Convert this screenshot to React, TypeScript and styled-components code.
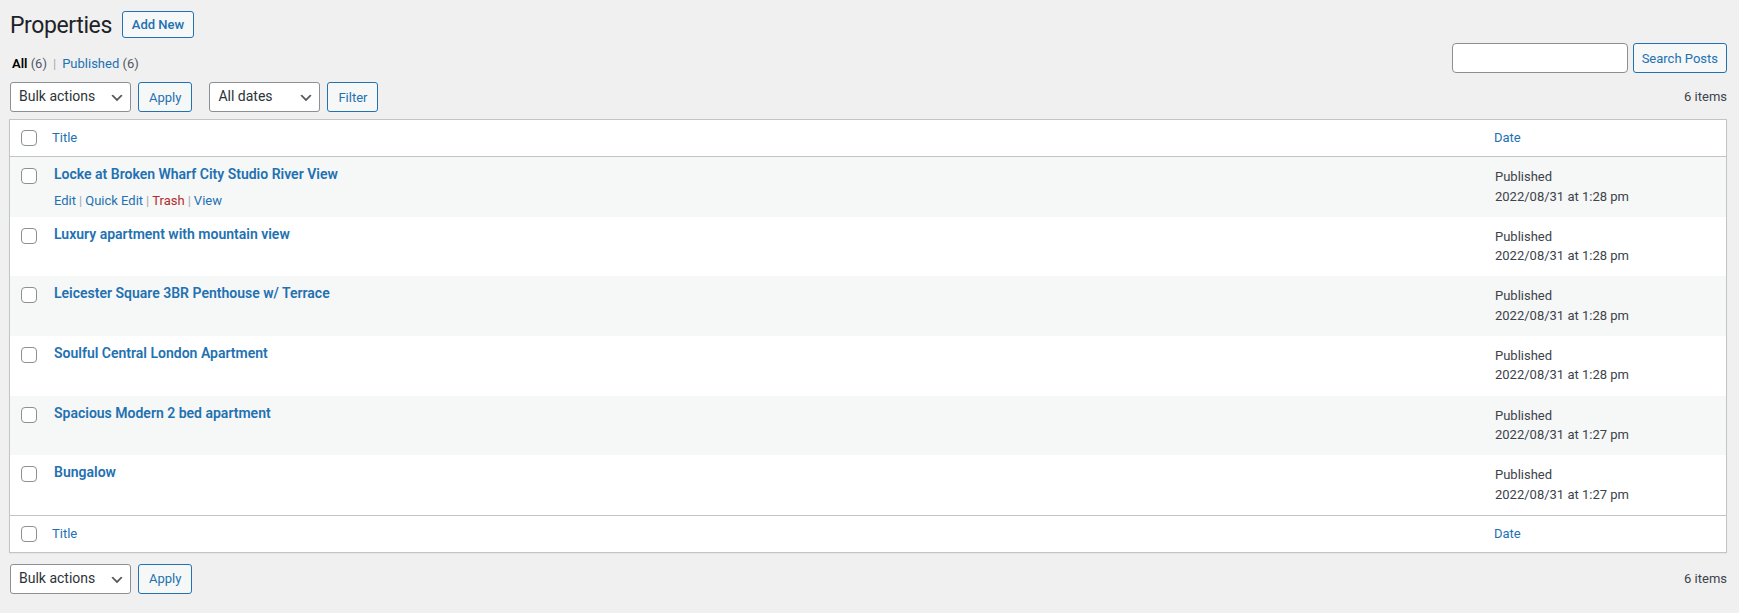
import React from 'react';
import styled, { createGlobalStyle } from 'styled-components';

const Global = createGlobalStyle`
  html, body { margin: 0; padding: 0; background: #f0f0f1; }
  body {
    font-family: Roboto, "Liberation Sans", Arial, sans-serif;
    font-size: 13px;
    color: #3c434a;
    line-height: 1.4;
  }
  * { box-sizing: border-box; }
`;

const Wrap = styled.div`
  padding: 0 12px 0 9px;
  width: 1739px;
`;

const HeadingRow = styled.div`
  display: flex;
  align-items: center;
  gap: 10px;
  height: 38px;
  padding: 11px 0 0 1px;
`;

const PageTitle = styled.h1`
  margin: 0;
  font-size: 23px;
  font-weight: 400;
  letter-spacing: -0.4px;
  line-height: 25px;
  height: 27px;
  color: #1d2327;
  padding-top: 2px;
`;

const Button = styled.button<{ $h?: number; $px?: number }>`
  display: inline-flex;
  align-items: center;
  justify-content: center;
  height: ${(p) => p.$h ?? 30}px;
  padding: 0 ${(p) => p.$px ?? 10}px;
  border: 1px solid #2271b1;
  border-radius: 3px;
  background: #f6f7f7;
  color: #2271b1;
  font-family: inherit;
  font-size: 13px;
  font-weight: ${(p) => (p.$h ? 500 : 400)};
  cursor: pointer;
  white-space: nowrap;
`;

const FilterRow = styled.div`
  display: flex;
  justify-content: space-between;
  align-items: flex-start;
  margin-top: 5px;
  height: 30px;
`;

const SubSub = styled.ul`
  display: flex;
  list-style: none;
  margin: 11px 0 0 3px;
  padding: 0;
  font-size: 13px;
  line-height: 20px;
  color: #646970;
`;

const SubItem = styled.li<{ $current?: boolean }>`
  a {
    color: ${(p) => (p.$current ? '#000' : '#2271b1')};
    font-weight: ${(p) => (p.$current ? 600 : 400)};
    text-decoration: none;
  }
`;

const Count = styled.span`
  color: #50575e;
  font-weight: 400;
`;

const Sep = styled.span`
  color: #a7aaad;
  padding: 0 6px;
`;

const SearchBox = styled.div`
  display: flex;
  gap: 5px;
`;

const SearchInput = styled.input`
  width: 176px;
  height: 30px;
  border: 1px solid #8c8f94;
  border-radius: 4px;
  background: #fff;
  padding: 0 8px;
  font-family: inherit;
  font-size: 14px;
  outline: none;
`;

const Tablenav = styled.div<{ $top?: number }>`
  display: flex;
  align-items: center;
  margin-top: ${(p) => p.$top ?? 9}px;
  height: 30px;
  padding-left: 1px;
`;

const Actions = styled.div`
  display: flex;
  align-items: center;
  gap: 7px;
  margin-right: 17px;
`;

const SelectBox = styled.div<{ $w: number }>`
  position: relative;
  display: flex;
  align-items: center;
  width: ${(p) => p.$w}px;
  height: 30px;
  padding: 0 24px 0 8px;
  border: 1px solid #8c8f94;
  border-radius: 3px;
  background: #fff;
  color: #2c3338;
  font-size: 14px;
  svg {
    position: absolute;
    right: 5px;
    top: 7px;
  }
`;

const DisplayNum = styled.div`
  margin-left: auto;
  font-size: 13px;
  color: #3c434a;
`;

const Table = styled.div`
  margin-top: 7px;
  border: 1px solid #c3c4c7;
  background: #fff;
  box-shadow: 0 1px 1px rgba(0, 0, 0, 0.04);
`;

const cols = '32px 1fr 242px';

const HeadRow = styled.div<{ $foot?: boolean }>`
  display: grid;
  grid-template-columns: ${cols};
  align-items: center;
  height: 37px;
  ${(p) => (p.$foot ? 'border-top: 1px solid #c3c4c7;' : 'border-bottom: 1px solid #c3c4c7;')}
`;

const Row = styled.div<{ $alt: boolean }>`
  display: grid;
  grid-template-columns: ${cols};
  align-items: start;
  height: 59.67px;
  background: ${(p) => (p.$alt ? '#f6f7f7' : '#fff')};
`;

const Check = styled.span`
  display: block;
  width: 16px;
  height: 16px;
  border: 1px solid #8c8f94;
  border-radius: 4px;
  background: #fff;
`;

const CheckCell = styled.div<{ $row?: boolean }>`
  padding-left: 11px;
  padding-top: ${(p) => (p.$row ? 11 : 0)}px;
`;

const HeadLink = styled.a<{ $pl: number }>`
  padding-left: ${(p) => p.$pl}px;
  color: #2271b1;
  text-decoration: none;
  font-size: 13px;
`;

const TitleCell = styled.div`
  padding: 8px 10px 0 12px;
`;

const RowTitle = styled.a`
  display: block;
  color: #2271b1;
  font-size: 14px;
  font-weight: 600;
  line-height: 19.6px;
  text-decoration: none;
  margin-bottom: 4px;
`;

const RowActions = styled.div`
  padding-top: 2px;
  font-size: 13px;
  line-height: 19.5px;
  color: #a7aaad;
`;

const ActionLink = styled.a<{ $danger?: boolean }>`
  color: ${(p) => (p.$danger ? '#b32d2e' : '#2271b1')};
  text-decoration: none;
`;

const ActionSep = styled.span`
  padding: 0 3px;
`;

const DateCell = styled.div`
  padding: 10px 10px 0 11px;
  font-size: 13px;
  line-height: 19.5px;
  color: #3c434a;
`;

const Chevron = () => (
  <svg width="16" height="16" viewBox="0 0 20 20" aria-hidden="true">
    <path d="M5 6l5 5 5-5 2 1-7 7-7-7 2-1z" fill="#555" />
  </svg>
);

const Select = ({ w, label }: { w: number; label: string }) => (
  <SelectBox $w={w}>
    {label}
    <Chevron />
  </SelectBox>
);

const posts = [
  { title: 'Locke at Broken Wharf City Studio River View', date: '2022/08/31 at 1:28 pm' },
  { title: 'Luxury apartment with mountain view', date: '2022/08/31 at 1:28 pm' },
  { title: 'Leicester Square 3BR Penthouse w/ Terrace', date: '2022/08/31 at 1:28 pm' },
  { title: 'Soulful Central London Apartment', date: '2022/08/31 at 1:28 pm' },
  { title: 'Spacious Modern 2 bed apartment', date: '2022/08/31 at 1:27 pm' },
  { title: 'Bungalow', date: '2022/08/31 at 1:27 pm' },
];

const HeaderCols = ({ foot }: { foot?: boolean }) => (
  <HeadRow $foot={foot}>
    <CheckCell>
      <Check />
    </CheckCell>
    <HeadLink $pl={10}>Title</HeadLink>
    <HeadLink $pl={10}>Date</HeadLink>
  </HeadRow>
);

export default function App() {
  return (
    <>
      <Global />
      <Wrap>
        <HeadingRow>
          <PageTitle>Properties</PageTitle>
          <Button $h={27} $px={9}>Add New</Button>
        </HeadingRow>

        <FilterRow>
          <SubSub>
            <SubItem $current>
              <a>
                All <Count>(6)</Count>
              </a>
              <Sep>|</Sep>
            </SubItem>
            <SubItem>
              <a>
                Published <Count>(6)</Count>
              </a>
            </SubItem>
          </SubSub>
          <SearchBox>
            <SearchInput />
            <Button $px={8}>Search Posts</Button>
          </SearchBox>
        </FilterRow>

        <Tablenav>
          <Actions>
            <Select w={121} label="Bulk actions" />
            <Button>Apply</Button>
          </Actions>
          <Actions>
            <Select w={111} label="All dates" />
            <Button>Filter</Button>
          </Actions>
          <DisplayNum>6 items</DisplayNum>
        </Tablenav>

        <Table>
          <HeaderCols />
          {posts.map((p, i) => (
            <Row key={p.title} $alt={i % 2 === 0}>
              <CheckCell $row>
                <Check />
              </CheckCell>
              <TitleCell>
                <RowTitle>{p.title}</RowTitle>
                {i === 0 && (
                  <RowActions>
                    <ActionLink>Edit</ActionLink>
                    <ActionSep>|</ActionSep>
                    <ActionLink>Quick Edit</ActionLink>
                    <ActionSep>|</ActionSep>
                    <ActionLink $danger>Trash</ActionLink>
                    <ActionSep>|</ActionSep>
                    <ActionLink>View</ActionLink>
                  </RowActions>
                )}
              </TitleCell>
              <DateCell>
                Published
                <br />
                {p.date}
              </DateCell>
            </Row>
          ))}
          <HeaderCols foot />
        </Table>

        <Tablenav $top={11}>
          <Actions>
            <Select w={121} label="Bulk actions" />
            <Button>Apply</Button>
          </Actions>
          <DisplayNum>6 items</DisplayNum>
        </Tablenav>
      </Wrap>
    </>
  );
}
